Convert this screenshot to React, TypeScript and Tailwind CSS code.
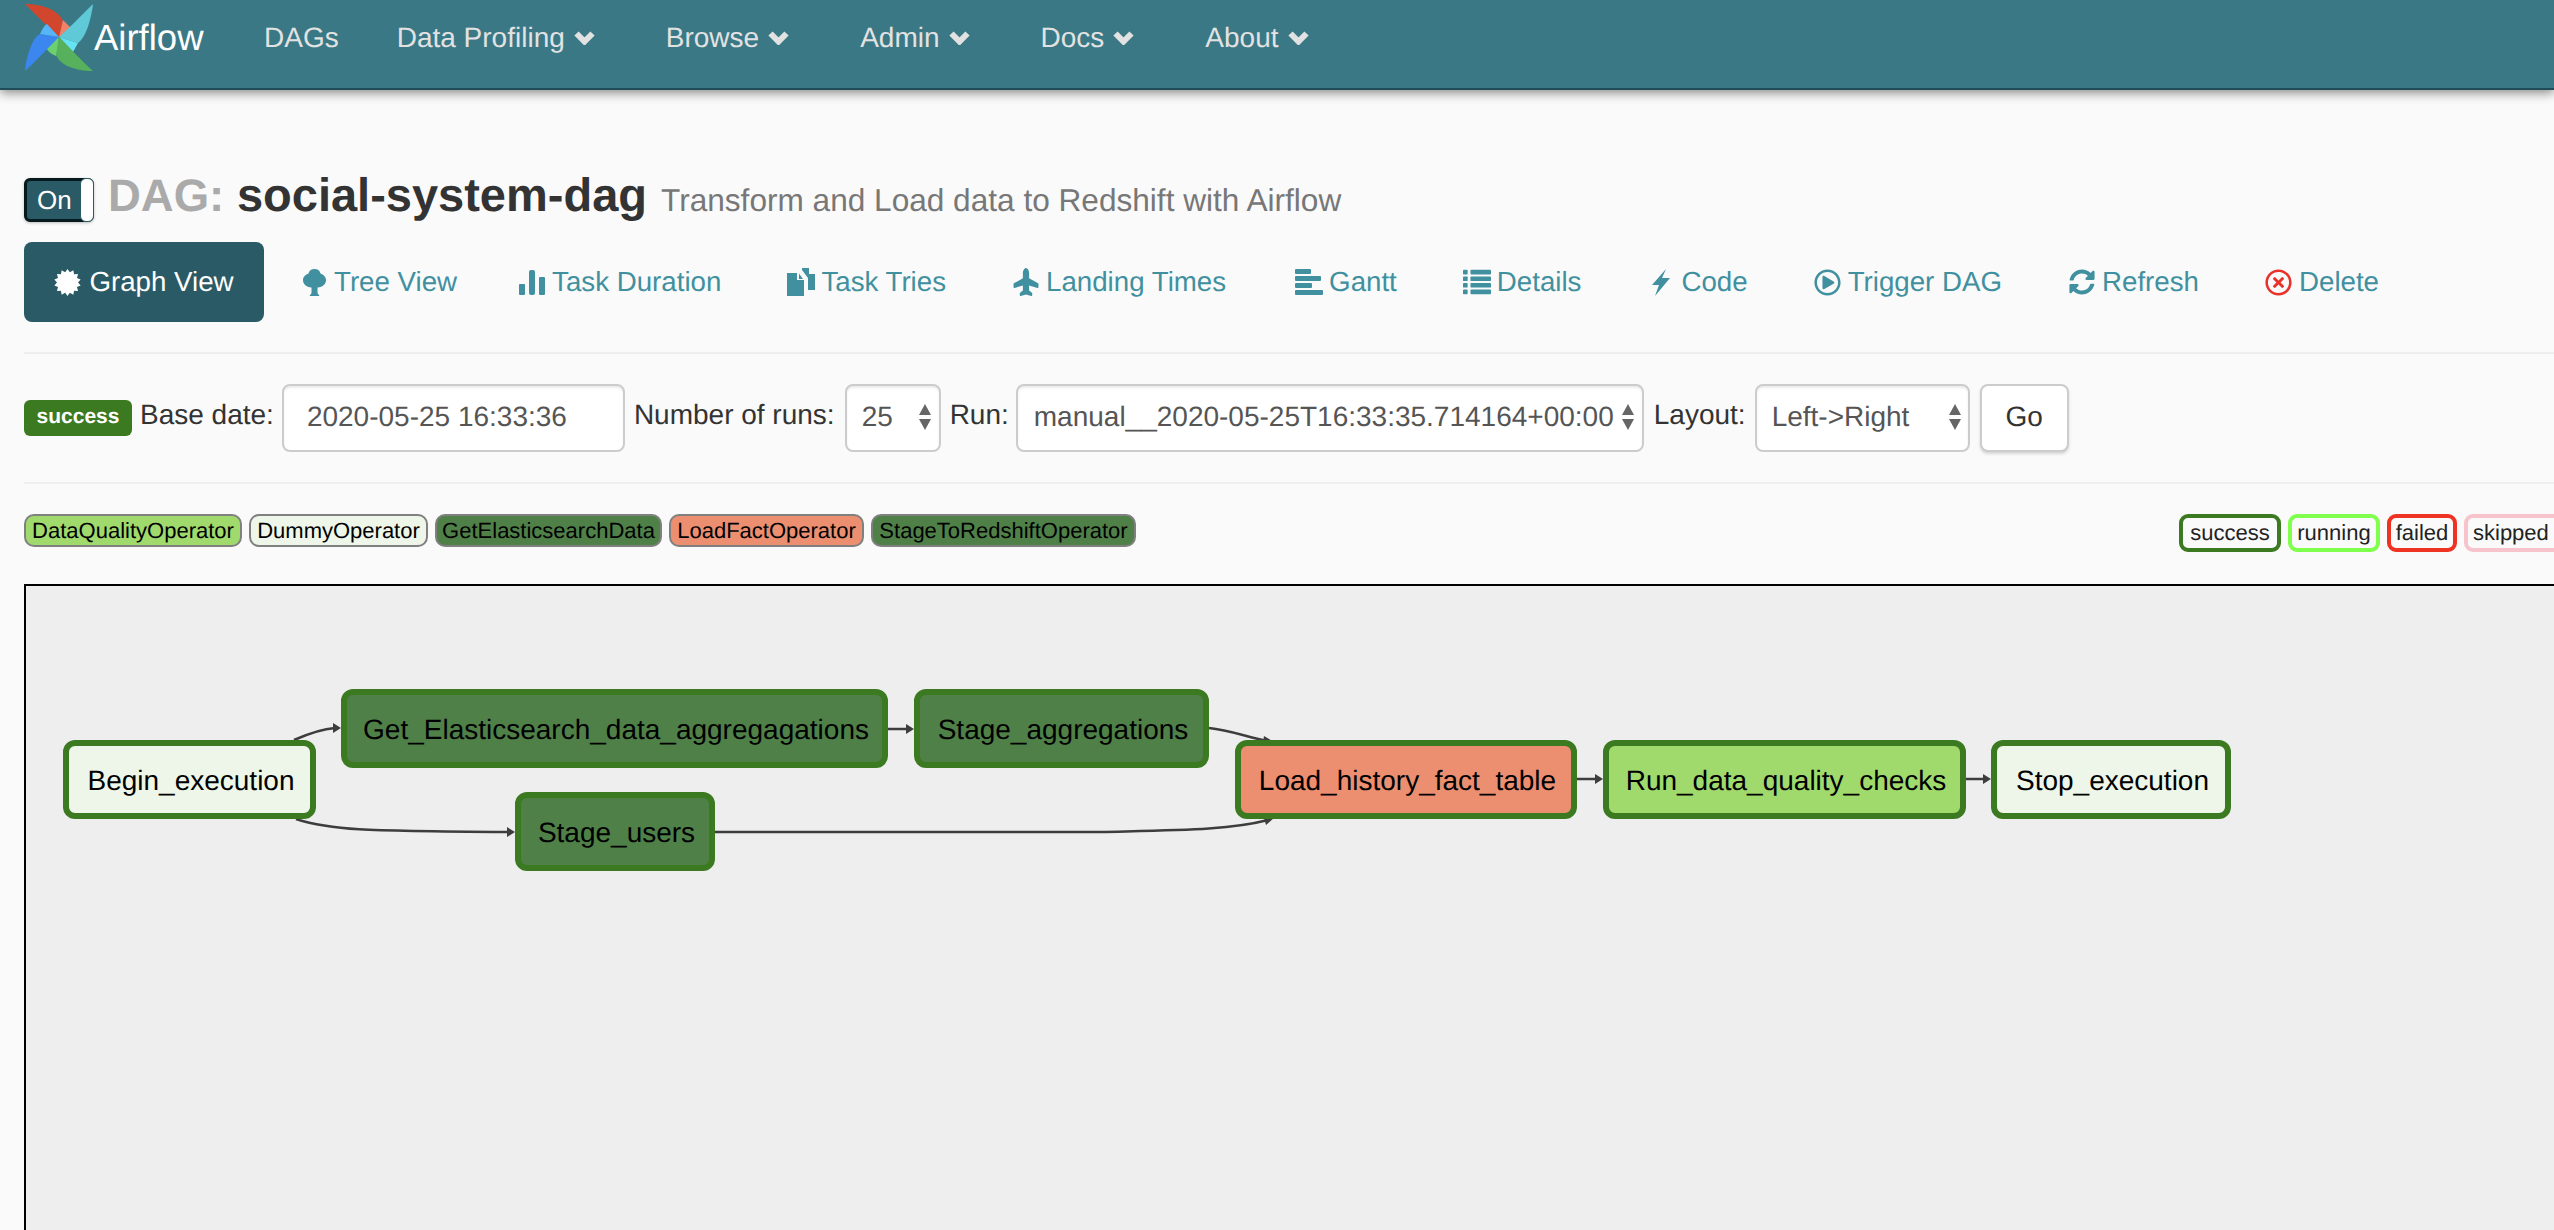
import React from "react";
import { FaPlane, FaRegPlayCircle, FaRegTimesCircle, FaSyncAlt } from "react-icons/fa";

const Logo = () => (
  <svg width="70" height="70" viewBox="24 4 70 70" className="shrink-0">
    <path d="M25 5C40 5 58 10 63 22L59 38C50 30 38 18 25 5Z" fill="#d1462d" />
    <path d="M63 21L73 31C68 34 63 36 59 38Z" fill="#ef8267" />
    <path d="M93 5C91 22 85 40 78 44L59 38C68 30 80 18 93 5Z" fill="#5fc9d8" />
    <path d="M59 38L78 44L73 53Z" fill="#66e2f2" />
    <path d="M93 72C75 72 60 66 56 56L59 38C68 47 80 60 93 72Z" fill="#56b05c" />
    <path d="M59 38L56 57C50 55 46 50 45 46Z" fill="#6bd06d" />
    <path d="M25 72C27 55 33 38 40 35L59 38C50 47 38 60 25 72Z" fill="#3b87ef" />
    <path d="M59 38L40 35C42 30 45 26 47 25Z" fill="#55b5f7" />
  </svg>
);

const Chevron = () => (
  <svg width="21" height="14" viewBox="0 0 21 14" fill="none" stroke="currentColor" strokeWidth="6" className="shrink-0">
    <path d="M2.5 2.5L10.5 10.5L18.5 2.5" />
  </svg>
);

const burstPoints = Array.from({ length: 28 }, (_, i) => {
  const a = (i * Math.PI) / 14;
  const r = i % 2 === 0 ? 13.5 : 10.5;
  return `${(13.5 + r * Math.sin(a)).toFixed(2)},${(13.5 - r * Math.cos(a)).toFixed(2)}`;
}).join(" ");

const Burst = () => (
  <svg width="27" height="27" viewBox="0 0 27 27" fill="currentColor">
    <polygon points={burstPoints} />
  </svg>
);
const Tree = () => (
  <svg width="23" height="27" viewBox="0 0 23 27" fill="currentColor">
    <path d="M11.5 0C15 0 17 2 17.5 4.5C20.5 5.5 23 8 23 11C23 15 20 18 14.5 18.5V24L16.5 27H6.5L8.5 24V18.5C3 18 0 15 0 11C0 8 2.5 5.5 5.5 4.5C6 2 8 0 11.5 0Z" />
  </svg>
);
const Stats = () => (
  <svg width="26" height="25" viewBox="0 0 26 25" fill="currentColor">
    <rect x="0" y="14" width="6" height="11" rx="1" />
    <rect x="10" y="0" width="6" height="25" rx="2" />
    <rect x="20" y="7" width="6" height="18" rx="1" />
  </svg>
);
const Duplicate = () => (
  <svg width="28" height="28" viewBox="0 0 28 28" fill="currentColor">
    <path d="M0 5H10V12H17V28H0Z" />
    <path d="M12 5.5L16 11H12Z" />
    <path d="M12 0H15V2L21 10V22H28V6H22V0Z" />
  </svg>
);
const AlignBars = () => (
  <svg width="28" height="26" viewBox="0 0 28 26" fill="currentColor">
    <rect x="0" y="0" width="16" height="5" rx="1" />
    <rect x="0" y="7" width="26" height="5" rx="1" />
    <rect x="0" y="14" width="17" height="5" rx="1" />
    <rect x="0" y="21" width="28" height="5" rx="1" />
  </svg>
);
const ListIcon = () => (
  <svg width="30" height="26" viewBox="0 0 30 26" fill="currentColor">
    {[0, 7, 14, 21].map((y) => (
      <g key={y}>
        <rect x="0" y={y} width="5" height="5" rx="1" />
        <rect x="8" y={y} width="22" height="5" rx="1" />
      </g>
    ))}
  </svg>
);
const Flash = () => (
  <svg width="20" height="27" viewBox="0 0 20 27" fill="currentColor">
    <path d="M15 0L1 16H8L4 27L19 9H11Z" />
  </svg>
);

const tabs: { label: string; icon: React.ReactNode; pad: string }[] = [
  { label: "Tree View", icon: <Tree />, pad: "pl-[30px] pr-[25px]" },
  { label: "Task Duration", icon: <Stats />, pad: "px-[30px]" },
  { label: "Task Tries", icon: <Duplicate />, pad: "px-[30px]" },
  { label: "Landing Times", icon: <FaPlane className="-rotate-90 text-[28px]" />, pad: "pl-[30px] pr-[33px]" },
  { label: "Gantt", icon: <AlignBars />, pad: "px-[30px]" },
  { label: "Details", icon: <ListIcon />, pad: "px-[30px]" },
  { label: "Code", icon: <Flash />, pad: "px-[30px]" },
  { label: "Trigger DAG", icon: <FaRegPlayCircle className="text-[27px]" />, pad: "px-[30px]" },
  { label: "Refresh", icon: <FaSyncAlt className="text-[26px]" />, pad: "px-[30px]" },
  { label: "Delete", icon: <FaRegTimesCircle className="text-[27px] text-[#e8332a]" />, pad: "px-[30px]" },
];

const Arrows = () => (
  <svg width="14" height="26" viewBox="0 0 14 26" fill="#666" className="shrink-0">
    <path d="M7 0L13 11H1Z" />
    <path d="M7 26L13 15H1Z" />
  </svg>
);

const fieldClass = "h-[68px] flex items-center bg-white border-2 border-[#cccccc] rounded-[8px] text-[#555555] shadow-[inset_0_2px_2px_rgba(0,0,0,0.08)]";

const Label = ({ children, className = "" }: { children: React.ReactNode; className?: string }) => (
  <span className={`text-[#333333] whitespace-nowrap mb-[6px] ${className}`}>{children}</span>
);

const chipClass = "h-[33px] flex items-center justify-center border-2 border-[#808080] rounded-[10px] text-[22px] text-black whitespace-nowrap";
const statusClass = "h-[38px] flex items-center justify-center border-[4px] rounded-[9px] text-[22px] text-[#222222] whitespace-nowrap bg-[#fafafa] pb-[2px]";
const nodeClass = "absolute h-[79px] flex items-center justify-center border-[6px] border-[#3c7a22] rounded-[12px] text-[28px] text-black whitespace-nowrap pt-[2px] pl-[3px]";

export default function App() {
  return (
    <div className="w-[2554px] h-[1230px] overflow-hidden bg-[#fafafa] font-['Liberation_Sans',Arial,sans-serif] text-[28px] [text-rendering:geometricPrecision]">
      <header className="h-[90px] bg-[#397884] border-b-2 border-[#1f4c57] shadow-[0_3px_10px_rgba(0,0,0,0.45)] flex items-center pl-[24px] pb-[12px] text-[#e2e2e2]">
        <Logo />
        <span className="text-[36.5px] text-white w-[170px] leading-none">Airflow</span>
        <nav className="flex items-center gap-[62px]">
          <span className="-mr-[4px]">DAGs</span>
          {["Data Profiling", "Browse", "Admin", "Docs", "About"].map((n) => (
            <span key={n} className="flex items-center gap-[9px] pr-[9px]">
              {n}
              <Chevron />
            </span>
          ))}
        </nav>
      </header>

      <main className="pl-[24px] w-[2574px]">
        <div className="mt-[88px] h-[44px] flex items-center">
          <div className="relative w-[70px] h-[44px] rounded-[6px] bg-[#2a5a65] border-[3px] border-[#061a1e] shadow-[0_1px_3px_rgba(0,0,0,0.25)] flex items-center pl-[10px] text-white text-[26px]">
            On
            <div className="absolute right-[-3px] top-[-3px] bottom-[-3px] w-[14px] bg-white rounded-[6px] border border-[#2a5a65]" />
          </div>
          <h1 className="ml-[14px] mb-[10px] font-bold text-[47px] leading-none text-[#333333] whitespace-nowrap">
            <span className="text-[#aaaaaa] text-[45.5px]">DAG: </span>social-system-dag
            <span className="font-normal text-[31.6px] text-[#777777] ml-[14px]">Transform and Load data to Redshift with Airflow</span>
          </h1>
        </div>

        <div className="mt-[20px] flex items-center gap-[6px] h-[80px] text-[#40909f] text-[27.7px]">
          <div className="h-[80px] w-[240px] rounded-[8px] bg-[#2a5a65] text-white flex items-center justify-center gap-[8px]">
            <Burst />
            Graph View
          </div>
          {tabs.map((t) => (
            <div key={t.label} className={`h-[80px] flex items-center gap-[6px] whitespace-nowrap ${t.pad}`}>
              <span className="w-[28px] flex items-center justify-center">{t.icon}</span>
              {t.label}
            </div>
          ))}
        </div>

        <div className="mt-[30px] h-[2px] bg-[#eeeeee]" />

        <div className="mt-[30px] h-[68px] flex items-center gap-[8px]">
          <span className="h-[36px] w-[108px] flex items-center justify-center rounded-[6px] bg-[#3c7a22] text-white font-bold text-[21px] pb-[2px]">success</span>
          <Label>Base date:</Label>
          <div className={`${fieldClass} w-[343px] pl-[23px] pb-[2px]`}>2020-05-25 16:33:36</div>
          <Label className="ml-[1px]">Number of runs:</Label>
          <div className={`${fieldClass} w-[96px] ml-[2px] pl-[15px] pr-[7px] pb-[2px] justify-between`}>25<Arrows /></div>
          <Label className="ml-[1px]">Run:</Label>
          <div className={`${fieldClass} w-[628px] -ml-[1px] pl-[16px] pr-[7px] pb-[2px] justify-between whitespace-nowrap`}>manual__2020-05-25T16:33:35.714164+00:00<Arrows /></div>
          <Label className="ml-[2px]">Layout:</Label>
          <div className={`${fieldClass} w-[215px] ml-[1px] pl-[15px] pr-[6px] pb-[2px] justify-between`}>{"Left->Right"}<Arrows /></div>
          <div className="h-[68px] w-[89px] ml-[2px] flex items-center justify-center bg-white border-2 border-[#cccccc] rounded-[8px] text-[#333333] shadow-[0_2px_3px_rgba(0,0,0,0.15)] pb-[2px]">Go</div>
        </div>

        <div className="mt-[30px] h-[2px] bg-[#eeeeee]" />

        <div className="mt-[30px] h-[38px] flex items-start justify-between">
          <div className="flex gap-[7px]">
            <span className={`${chipClass} w-[218px] bg-[#a0d96c]`}>DataQualityOperator</span>
            <span className={`${chipClass} w-[179px] bg-[#edf6e8]`}>DummyOperator</span>
            <span className={`${chipClass} w-[227px] bg-[#4f8048]`}>GetElasticsearchData</span>
            <span className={`${chipClass} w-[195px] bg-[#ec8e70]`}>LoadFactOperator</span>
            <span className={`${chipClass} w-[265px] bg-[#4f8048]`}>StageToRedshiftOperator</span>
          </div>
          <div className="flex gap-[7px]">
            <span className={`${statusClass} w-[102px] border-[#3c7a22]`}>success</span>
            <span className={`${statusClass} w-[92px] border-[#80ff4c]`}>running</span>
            <span className={`${statusClass} w-[70px] border-[#ee3322]`}>failed</span>
            <span className={`${statusClass} w-[110px] border-[#f8c4cc] !justify-start pl-[5px]`}>skipped</span>
          </div>
        </div>

        <div className="mt-[32px] relative h-[700px] bg-[#eeeeee] border-2 border-black">
          <svg className="absolute left-0 top-0" width="2550" height="700" viewBox="26 586 2550 700" fill="none" stroke="#3d3d3d" strokeWidth="2.5">
            <path d="M294 740C310 733 322 729 335 728" />
            <path d="M341 728L333 723V733Z" fill="#3d3d3d" stroke="none" />
            <path d="M296 819C330 830 360 831 508 832" />
            <path d="M515 832L507 827V837Z" fill="#3d3d3d" stroke="none" />
            <path d="M888 729H908" />
            <path d="M914 729L906 724V734Z" fill="#3d3d3d" stroke="none" />
            <path d="M1209 728C1230 730 1250 738 1268 741" />
            <path d="M1274 742L1264 736L1263 742Z" fill="#3d3d3d" stroke="none" />
            <path d="M715 832H1100C1180 830 1230 830 1268 820" />
            <path d="M1274 818L1264 818L1266 825Z" fill="#3d3d3d" stroke="none" />
            <path d="M1577 779H1597" />
            <path d="M1603 779L1595 774V784Z" fill="#3d3d3d" stroke="none" />
            <path d="M1966 779H1985" />
            <path d="M1991 779L1983 774V784Z" fill="#3d3d3d" stroke="none" />
          </svg>
          <div className={`${nodeClass} left-[37px] top-[154px] w-[253px] bg-[#edf6e8]`}>Begin_execution</div>
          <div className={`${nodeClass} left-[315px] top-[103px] w-[547px] bg-[#4f8048]`}>Get_Elasticsearch_data_aggregagations</div>
          <div className={`${nodeClass} left-[489px] top-[206px] w-[200px] bg-[#4f8048]`}>Stage_users</div>
          <div className={`${nodeClass} left-[888px] top-[103px] w-[295px] bg-[#4f8048]`}>Stage_aggregations</div>
          <div className={`${nodeClass} left-[1209px] top-[154px] w-[342px] bg-[#ec8e70]`}>Load_history_fact_table</div>
          <div className={`${nodeClass} left-[1577px] top-[154px] w-[363px] bg-[#a0d96c]`}>Run_data_quality_checks</div>
          <div className={`${nodeClass} left-[1965px] top-[154px] w-[240px] bg-[#edf6e8]`}>Stop_execution</div>
        </div>
      </main>
    </div>
  );
}
